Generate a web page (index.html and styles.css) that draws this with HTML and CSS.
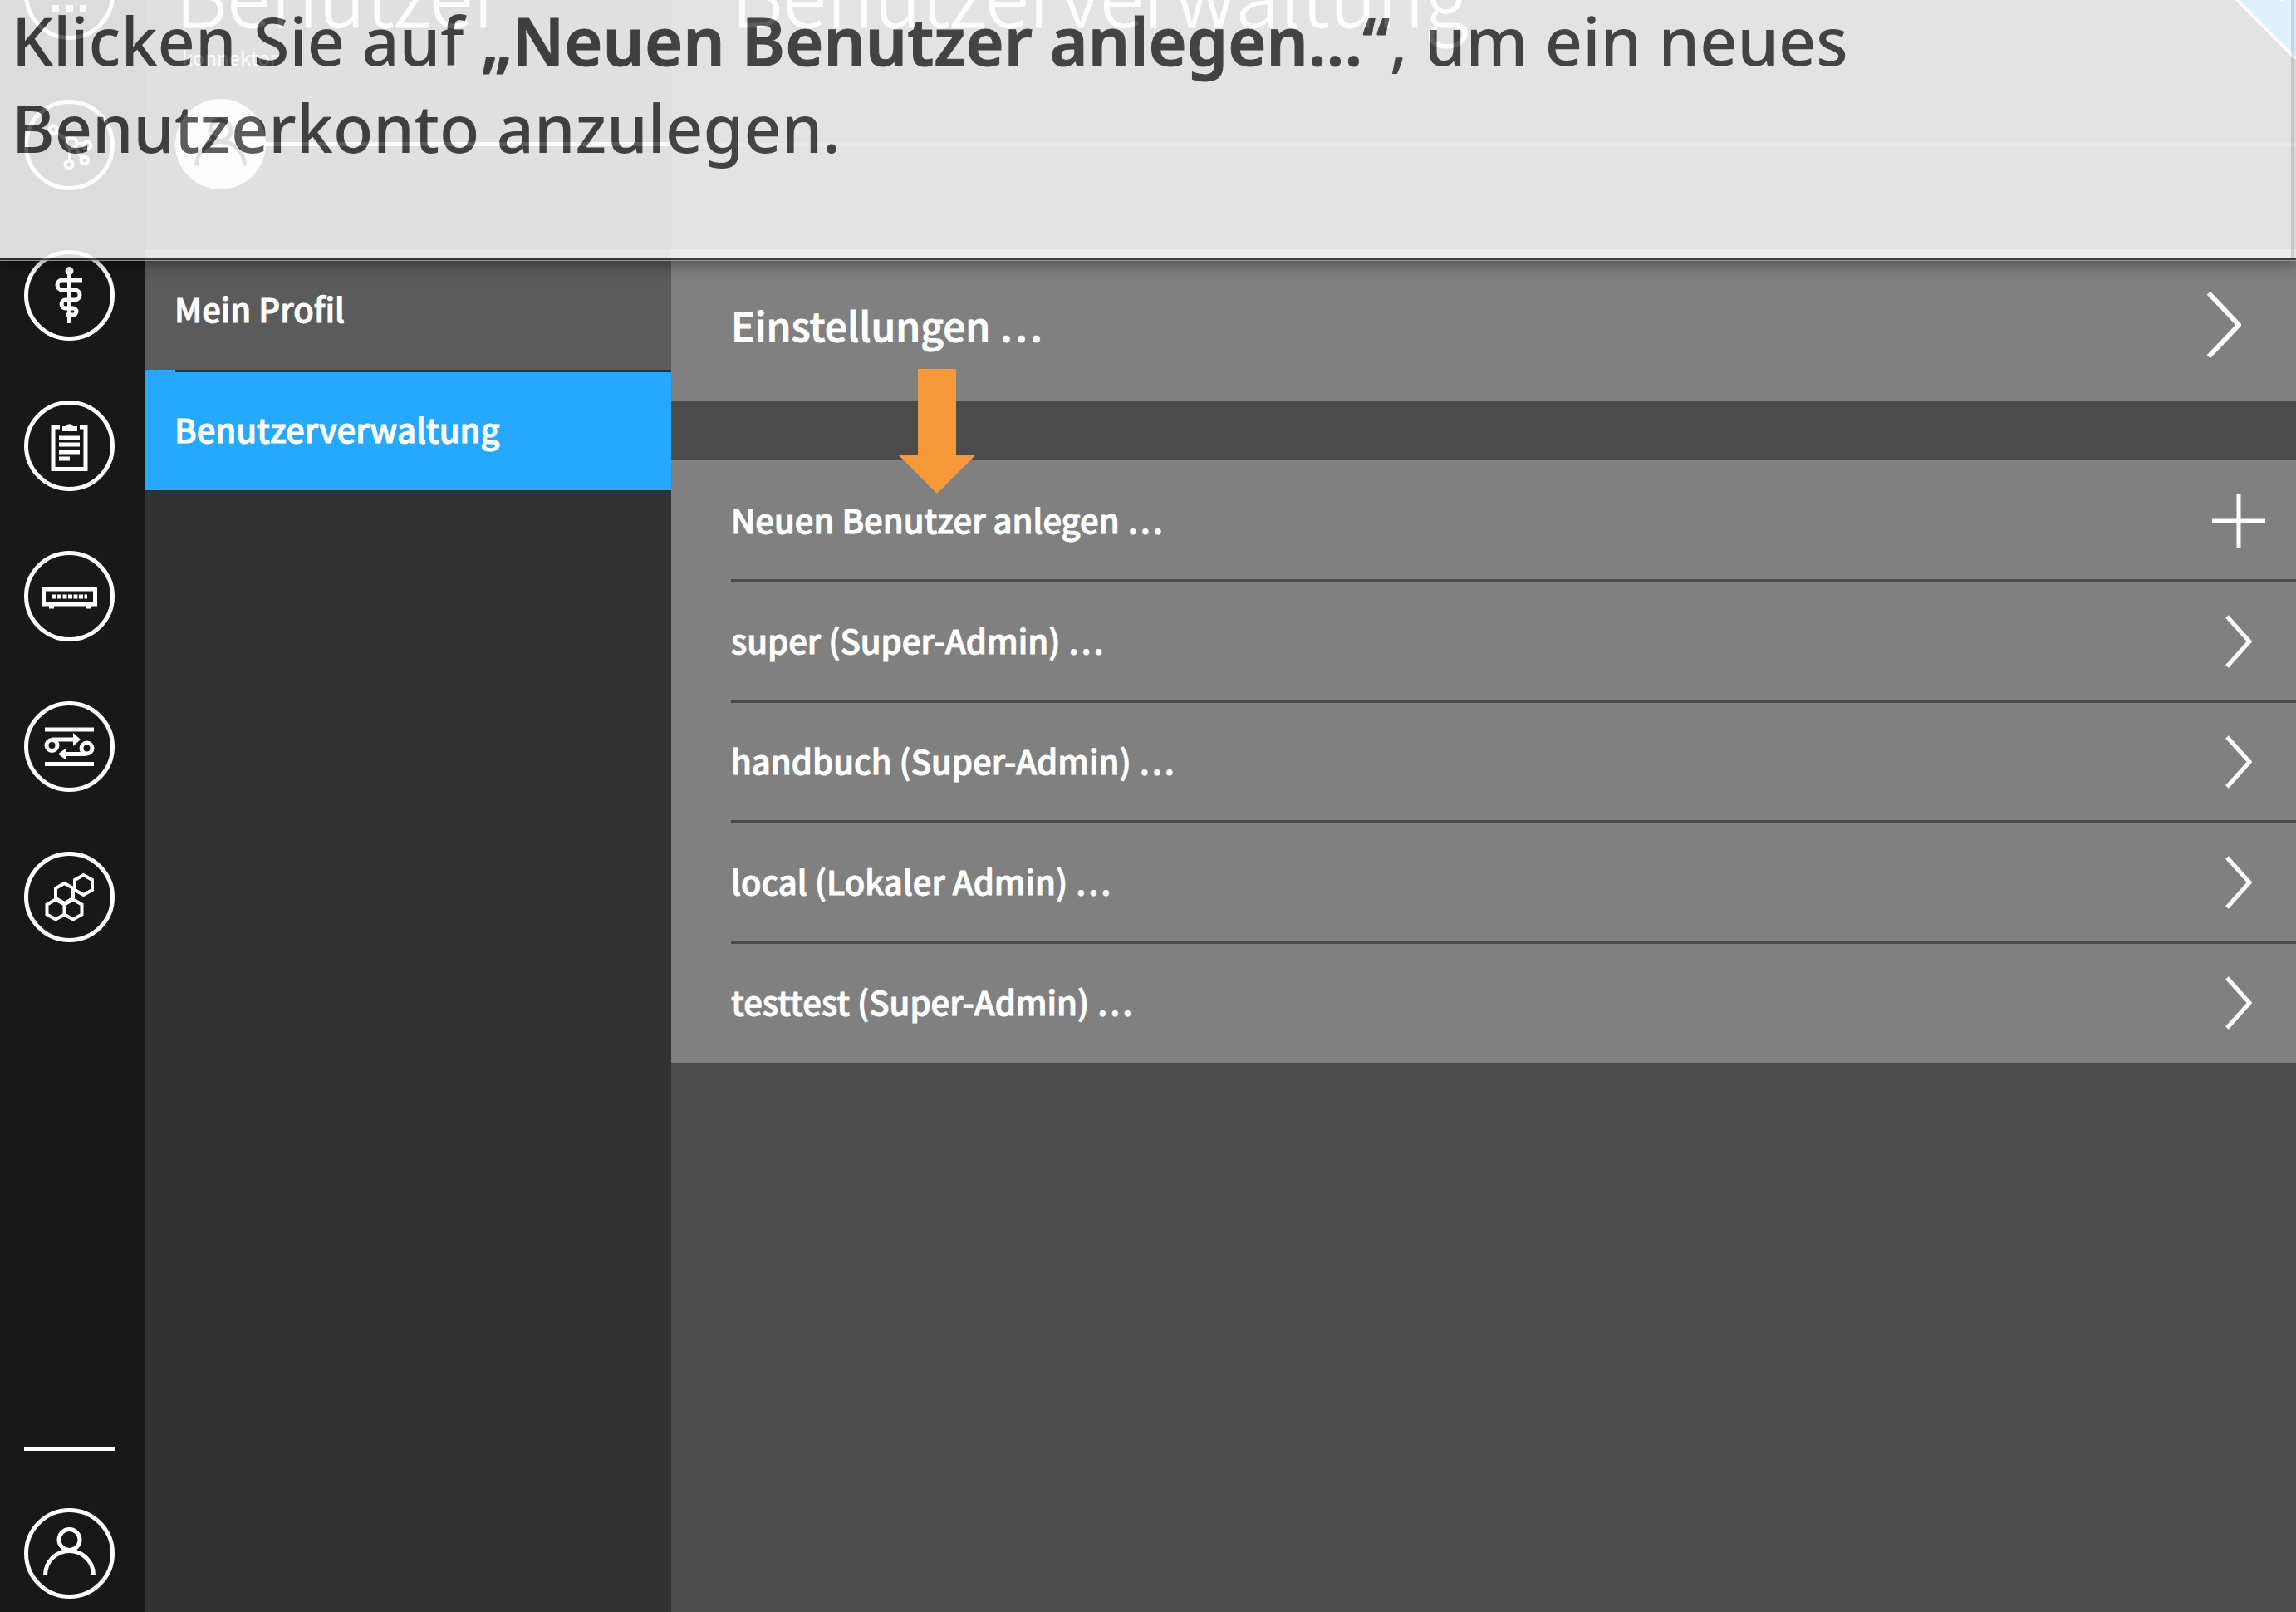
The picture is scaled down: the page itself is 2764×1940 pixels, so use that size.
FILE: index.html
```html
<!DOCTYPE html>
<html lang="de">
<head>
<meta charset="utf-8">
<title>Benutzerverwaltung</title>
<link rel="stylesheet" href="styles.css">
</head>
<body>
<div class="app">
  <nav class="rail" aria-label="Hauptnavigation">
    <a class="rail-link" href="#start" aria-label="Start"><svg class="rail-icon" viewBox="0 0 109 109"><circle cx="54.500" cy="54.500" r="52"/><path class="fill" d="M34 34h8v8h-8zM51 34h8v8h-8zM67 34h8v8h-8zM34 51h8v8h-8zM51 51h8v8h-8zM67 51h8v8h-8zM34 67h8v8h-8zM51 67h8v8h-8zM67 67h8v8h-8z"/></svg></a>
    <a class="rail-link" href="#netzwerk" aria-label="Netzwerk"><svg class="rail-icon" viewBox="0 0 109 109"><circle cx="54.500" cy="54.500" r="52"/><g stroke-width="4"><circle cx="35" cy="36" r="4.500"/><circle cx="57" cy="52" r="6.500"/><circle cx="76" cy="55" r="4.500"/><circle cx="54" cy="78" r="4.500"/><circle cx="73" cy="73" r="4.500"/><path d="M38 39l13 9M63 53h9M55 58v16M61 57l9 13"/></g></svg></a>
    <a class="rail-link" href="#praxis" aria-label="Praxis"><svg class="rail-icon" viewBox="0 0 109 109"><circle cx="54.500" cy="54.500" r="52"/><circle class="fill" cx="54.500" cy="25" r="5"/><path d="M54.500 25V88M70 36H46a6 6 0 0 0 0 12H61a6 6 0 0 1 0 12H50a5 5 0 0 0 0 10H59a4 4 0 0 1 0 8H51"/></svg></a>
    <a class="rail-link" href="#protokoll" aria-label="Protokoll"><svg class="rail-icon" viewBox="0 0 109 109"><circle cx="54.500" cy="54.500" r="52"/><path d="M43 32H35V82.500H74V32H67M42 45H67M42 53H67M42 62H67M42 70H55"/><path class="fill" d="M46 37v-6h4a5 5 0 0 1 9 0h5v6z"/></svg></a>
    <a class="rail-link" href="#system" aria-label="System"><svg class="rail-icon" viewBox="0 0 109 109"><circle cx="54.500" cy="54.500" r="52"/><rect x="23.500" y="46" width="62" height="18"/><path d="M30 67h6M74 67h6"/><path stroke-dasharray="5 1.500" d="M33.500 55H76"/></svg></a>
    <a class="rail-link" href="#dienste" aria-label="Dienste"><svg class="rail-icon" viewBox="0 0 109 109"><circle cx="54.500" cy="54.500" r="52"/><path d="M25 34H84M25 75.500H84M34 46H60M75 63.500H50"/><circle cx="33.500" cy="53" r="6.500"/><circle cx="75.500" cy="56.500" r="6.500"/><path class="fill" d="M59 38l9 8-9 8zM51 56l-10 7.500L51 71z"/></svg></a>
    <a class="rail-link" href="#module" aria-label="Module"><svg class="rail-icon" viewBox="0 0 109 109"><circle cx="54.500" cy="54.500" r="52"/><path stroke-width="4" d="M71.500 28l10.500 6v12l-10.500 6-10.500-6V34zM48.500 38l10.500 6v12l-10.500 6-10.500-6V44zM38 57.500l10.500 6v12L38 81.500l-10.500-6v-12zM59 57.500l10.500 6v12L59 81.500l-10.500-6v-12z"/></svg></a>
    <a class="rail-link rail-user" href="#benutzer" aria-label="Benutzer"><svg class="rail-icon" viewBox="0 0 109 109"><circle cx="54.500" cy="54.500" r="52"/><circle cx="54.500" cy="38" r="12.500"/><path d="M25.500 80.500a29 29 0 0 1 58 0"/></svg></a>
  </nav>

  <aside class="menu">
    <header class="menu-head">
      <h1 class="title">Benutzer</h1>
      <p class="subtitle">konnektor</p>
      <div class="avatar-row">
        <svg class="avatar" viewBox="0 0 109 109"><circle class="disc" cx="54.500" cy="54.500" r="54.500"/><circle cx="54.500" cy="38" r="12.500"/><path d="M25.500 80.500a29 29 0 0 1 58 0"/></svg>
      </div>
    </header>
    <a class="menu-item" href="#profil">Mein Profil</a>
    <a class="menu-item active" href="#verwaltung" aria-current="page">Benutzerverwaltung</a>
  </aside>

  <main class="content">
    <header class="content-head">
      <h2 class="title">Benutzerverwaltung</h2>
      <svg class="corner" viewBox="0 0 140 140"><path class="corner-fill" d="M0 0H140V140z"/><path class="corner-edge" d="M0 0L140 140"/><circle class="corner-dot" cx="122" cy="62" r="5"/></svg>
    </header>
    <a class="settings" href="#einstellungen"><span class="label">Einstellungen …</span><svg class="chevron-large" viewBox="0 0 44 86"><path d="M3 3l38 40L3 83"/></svg></a>
    <ul class="users">
      <li><a class="user" href="#neu"><span class="label">Neuen Benutzer anlegen …</span><svg class="plus" viewBox="0 0 64 64"><path d="M32 0V64M0 32H64"/></svg></a></li>
      <li><a class="user" href="#super"><span class="label">super (Super-Admin) …</span><svg class="chevron" viewBox="0 0 32 64"><path d="M2 2l27 30L2 62"/></svg></a></li>
      <li><a class="user" href="#handbuch"><span class="label">handbuch (Super-Admin) …</span><svg class="chevron" viewBox="0 0 32 64"><path d="M2 2l27 30L2 62"/></svg></a></li>
      <li><a class="user" href="#local"><span class="label">local (Lokaler Admin) …</span><svg class="chevron" viewBox="0 0 32 64"><path d="M2 2l27 30L2 62"/></svg></a></li>
      <li><a class="user" href="#testtest"><span class="label">testtest (Super-Admin) …</span><svg class="chevron" viewBox="0 0 32 64"><path d="M2 2l27 30L2 62"/></svg></a></li>
    </ul>
    <svg class="pointer" viewBox="0 0 92 150"><path d="M23 0H69V104H92L46 150 0 104H23z"/></svg>
  </main>
</div>
<div class="hint">
  <p class="hint-text">Klicken Sie auf <strong>„Neuen Benutzer anlegen...“</strong>, um ein neues<br>Benutzerkonto anzulegen.</p>
</div>
</body>
</html>
```
FILE: styles.css
```css
* { box-sizing: border-box; }

html, body { height: 100%; }

body {
  margin: 0;
  overflow: hidden;
  background: #4b4b4b;
  color: #fff;
  font-family: "Noto Sans CJK JP", "Noto Sans", sans-serif;
}

a { color: inherit; text-decoration: none; }

h1, h2, p, ul { margin: 0; padding: 0; }

svg { display: block; fill: none; stroke: #fff; }

/* The app is scrolled up under the hint */
.app {
  display: grid;
  grid-template-columns: 174px 634px 1fr;
  height: calc(100% + 62px);
  margin-top: -62px;
}

.rail {
  display: flex;
  flex-direction: column;
  align-items: center;
  gap: 72px;
  padding: 1px 8px 16px 0;
  background: #181818;
}

.rail-icon { width: 109px; height: 109px; stroke-width: 5px; }
.rail-icon .fill { fill: #fff; stroke: none; }

.rail-user {
  margin-top: auto;
  padding-top: 69px;
  border-top: 5px solid #fff;
}

.menu { background: #323232; }

.menu-head, .content-head { height: 362px; }

.menu-head { padding-left: 37px; }

.title {
  padding-top: 3px;
  font-size: 97px;
  line-height: 100px;
  font-weight: 300;
  -webkit-text-stroke: 1px #fff;
}

.subtitle {
  margin-top: 10px;
  padding: 0 8px;
  font-size: 24px;
  line-height: 36px;
}

.avatar-row {
  display: flex;
  align-items: center;
  margin-top: 32px;
}

.avatar-row::after {
  content: "";
  flex: 1;
  height: 5px;
  background: #fff;
}

.avatar { width: 109px; height: 109px; stroke: #323232; stroke-width: 5px; }
.avatar .disc { fill: #fff; stroke: none; }

.menu-item, .label {
  padding-bottom: 4px;
  font-size: 40px;
  font-weight: 500;
  -webkit-text-stroke: 1px #fff;
}

.menu-item {
  display: flex;
  align-items: center;
  height: 145px;
  padding-left: 36px;
  background: #5b5b5b;
}

.menu-item.active {
  background: linear-gradient(#323232, #323232) 37px 0 / 100% 3px no-repeat #24a9ff;
}

.content { position: relative; background: #4b4b4b; }

.content-head {
  padding-left: 72px;
  background: linear-gradient(#6b6b6b, #6b6b6b) 0 234px / 100% 5px no-repeat;
}

.corner {
  position: absolute;
  top: 0;
  right: 0;
  width: 133px;
  height: 133px;
}

.corner-fill { fill: #24a9ff; stroke: none; }
.corner-edge { stroke-width: 4px; }
.corner-dot { fill: #fff; stroke: none; }

.settings, .user {
  display: flex;
  align-items: center;
  justify-content: space-between;
}

.settings {
  height: 182px;
  margin-bottom: 72px;
  padding: 0 66px 0 72px;
  background: #808080;
}

.settings .label { padding-bottom: 2px; font-size: 48px; }

.chevron-large { width: 42px; height: 84px; stroke-width: 6px; }

.users {
  padding: 2px 0 2px 72px;
  background: #808080;
  list-style: none;
}

.users li + li { border-top: 4px solid #4b4b4b; }

.user {
  height: 141px;
  padding-right: 53px;
}

.chevron { width: 32px; height: 64px; stroke-width: 5px; }
.plus { width: 64px; height: 64px; margin-right: -16px; stroke-width: 5px; }

.pointer {
  position: absolute;
  top: 506px;
  left: 274px;
  width: 92px;
  height: 150px;
  fill: #f89939;
  stroke: none;
}

.hint {
  position: absolute;
  top: 0;
  left: 0;
  right: 0;
  height: 313px;
  padding-left: 14px;
  background: linear-gradient(90deg, transparent calc(100% - 6px), #dcdcdc 0 calc(100% - 3px), #f0f0f0 0) #fdfdfd;
  border-bottom: 2px solid #303030;
  box-shadow: 0 1px 0 #a0a0a0, 0 4px 18px rgba(0, 0, 0, 0.5);
  opacity: 0.86;
}

.hint-text {
  margin-top: -4px;
  color: #424242;
  font-family: "Noto Sans", sans-serif;
  font-size: 79px;
  font-weight: 500;
  line-height: 105px;
}

.hint-text strong {
  font-weight: 600;
  -webkit-text-stroke: 1px #424242;
}
```
